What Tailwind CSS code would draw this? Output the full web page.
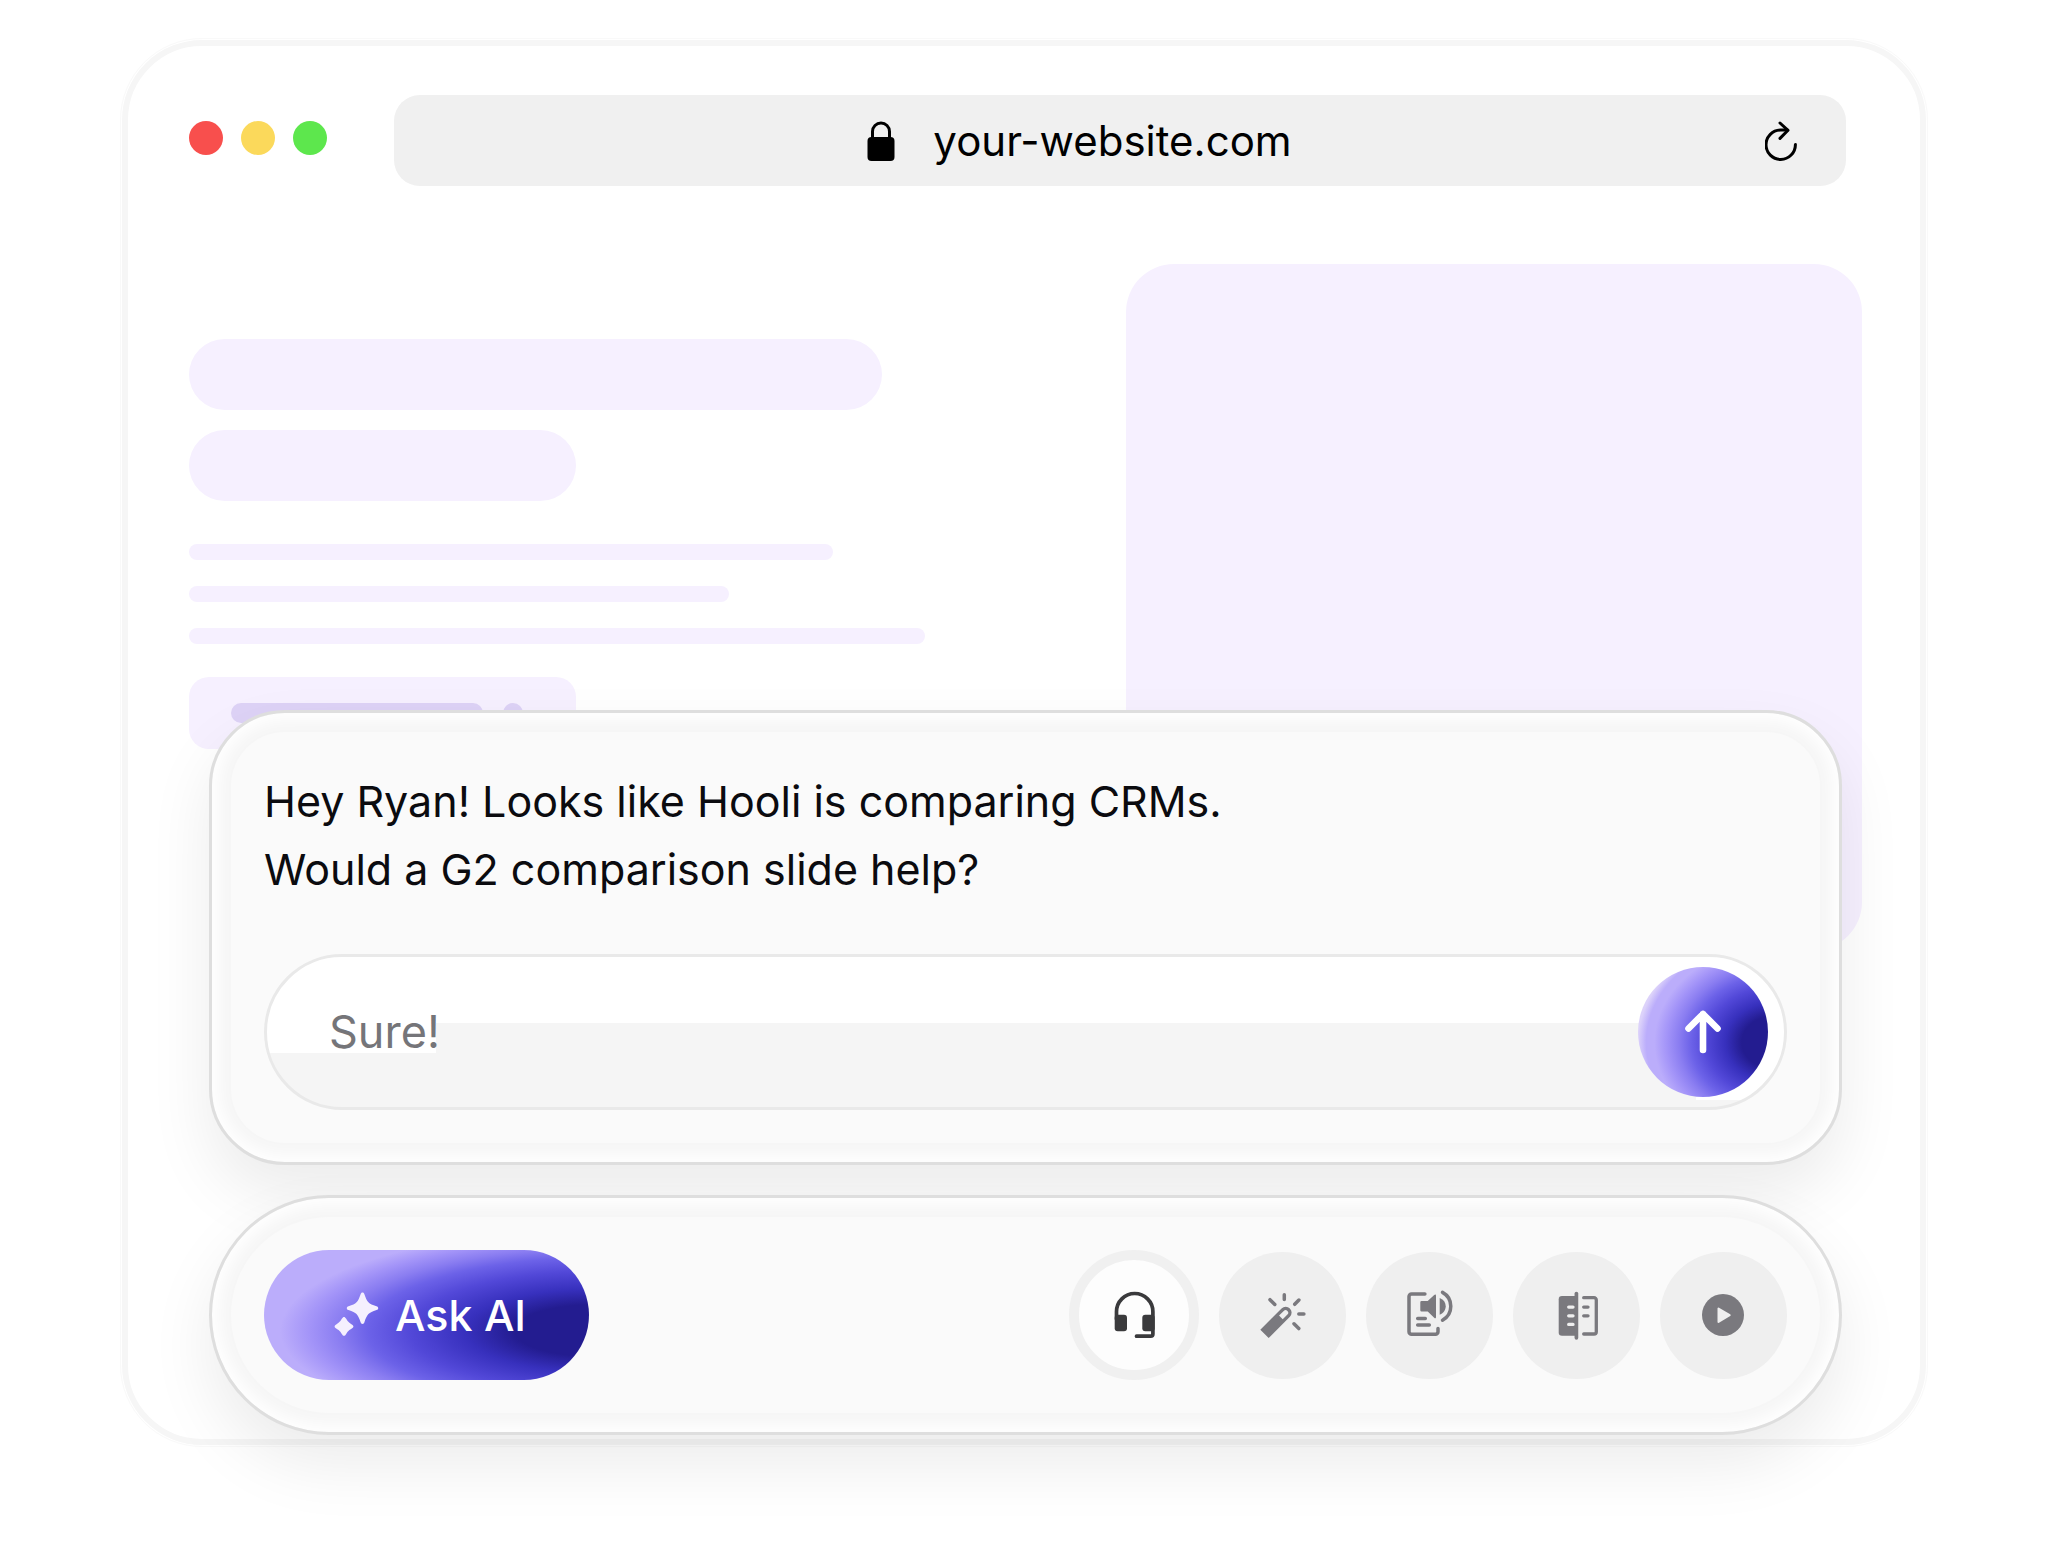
<!DOCTYPE html>
<html lang="en">
<head>
    <meta charset="UTF-8">
    <meta name="viewport" content="width=device-width, initial-scale=1.0">
    <title>Ask AI</title>
    <script src="https://cdn.jsdelivr.net/npm/@tailwindcss/browser@4"></script>
</head>
<body class="bg-white min-h-screen px-[122px] pt-10 pb-[101px] font-[Inter,sans-serif] text-[#0b0b0f]">
    <div class="border-6 border-[#f6f6f6] rounded-[80px] outline-1 outline-offset-1 outline-[#f9f9f9]">
        <!-- Browser bar -->
        <header class="flex items-center pt-[49px] pl-[61px] pr-[74px]">
            <div class="flex gap-[18px] -mt-1.5">
                <span class="size-[34px] rounded-full bg-[#f84f4d]"></span>
                <span class="size-[34px] rounded-full bg-[#fbd95b]"></span>
                <span class="size-[34px] rounded-full bg-[#5de74d]"></span>
            </div>
            <div class="flex-1 flex items-center ml-[67px] h-[91px] pr-[49px] rounded-[26px] bg-[#f0f0f0] text-black">
                <div class="flex-1 flex items-center justify-center gap-[38px]">
                    <svg class="w-7 h-10" viewBox="0 0 28 40" fill="none">
                        <path d="M5.5 18V10.5a8.5 8.5 0 0 1 17 0V18" stroke="currentColor" stroke-width="3"/>
                        <rect x="0.5" y="16" width="27" height="24" rx="4" fill="currentColor"/>
                    </svg>
                    <span class="text-[42px] leading-[52px]">your-website.com</span>
                </div>
                <button type="button" aria-label="Reload">
                    <svg class="w-8 h-10" viewBox="0 0 32 40" fill="none" stroke="currentColor" stroke-width="3" stroke-linecap="round" stroke-linejoin="round">
                        <path d="M30.4 23.6A14.7 14.7 0 1 1 15.7 9H22.5"/>
                        <path d="M15 2 23 9.3 15 17.4"/>
                    </svg>
                </button>
            </div>
        </header>

        <!-- Page skeleton -->
        <div class="flex justify-between pt-[78px] pl-[61px] pr-[58px]">
            <div class="flex-1 pt-[75px]">
                <div class="w-[693px] h-[71px] rounded-full bg-[#f6f0ff]"></div>
                <div class="w-[387px] h-[71px] mt-5 rounded-full bg-[#f6f0ff]"></div>
                <div class="w-[644px] h-4 mt-[43px] rounded-full bg-[#f6f0ff]"></div>
                <div class="w-[540px] h-4 mt-[26px] rounded-full bg-[#f6f0ff]"></div>
                <div class="w-[736px] h-4 mt-[26px] rounded-full bg-[#f6f0ff]"></div>
                <div class="flex items-center gap-5 w-[387px] h-[72px] mt-[33px] pl-[42px] rounded-[20px] bg-[#f6f0ff]">
                    <div class="w-[252px] h-5 rounded-full bg-[#ddd2f6]"></div>
                    <div class="size-5 rounded-full bg-[#ddd2f6]"></div>
                </div>
            </div>
            <div class="w-[44%] h-[686px] rounded-[48px] bg-[#f6f0ff]"></div>
        </div>

        <!-- Assistant -->
        <div class="relative flex flex-col gap-[30px] -mt-60 mb-1 ml-[81px] mr-[78px]">
            <section class="p-[19px] border-3 border-[#dedede] rounded-[76px] bg-[#f6f6f6] shadow-[inset_0_0_16px_7px_#fff,0_30px_64px_rgba(0,0,0,0.08)]">
                <div class="px-[33px] pt-[35px] pb-[33px] rounded-[54px] bg-[#fafafa]">
                    <p class="text-[43px] leading-[68px]">Hey Ryan! Looks like Hooli is comparing CRMs.<br>Would a G2 comparison slide help?</p>
                    <form class="flex items-center mt-[51px] h-[156px] pl-[62px] pr-4 border-3 border-[#e9e9e9] rounded-full bg-[linear-gradient(#fff,#fff),linear-gradient(#fff,#fff),linear-gradient(#fff,#fff),linear-gradient(#f5f5f5,#f5f5f5)] bg-[position:right_top,left_top,left_top,left_top] bg-[size:88px_143px,169px_96px,100%_66px,100%_100%] bg-no-repeat">
                        <input type="text" value="Sure!" aria-label="Your reply" class="flex-1 min-w-0 text-[45px] leading-[60px] text-[#757579] outline-none">
                        <button type="submit" aria-label="Send" class="flex items-center justify-center size-[130px] rounded-full text-white bg-[radial-gradient(105%_85%_at_105%_58%,#231c90_24%,#3730bd_36%,#5248d8_50%,#6c62e8_61%,#8a7df1_70%,#a394f8_79%,#bbadfb_88%,#bbadfb_94%,#dcd2fa_100%)]">
                            <svg class="w-9 h-11" viewBox="0 0 36 44" fill="none" stroke="currentColor" stroke-width="6.6" stroke-linecap="round" stroke-linejoin="round">
                                <path d="M18 40V4M3.5 18.5 18 4l14.5 14.5"/>
                            </svg>
                        </button>
                    </form>
                </div>
            </section>

            <section class="p-[19px] border-3 border-[#dedede] rounded-full bg-[#f6f6f6] shadow-[inset_0_0_16px_7px_#fff,0_30px_64px_rgba(0,0,0,0.08)]">
                <div class="flex items-center justify-between p-[33px] rounded-full bg-[#fafafa]">
                    <button type="button" class="flex items-center justify-center gap-4 w-[325px] h-[130px] pl-1.5 rounded-full text-white text-[43px] leading-[60px] font-medium bg-[radial-gradient(100%_80%_at_102%_62%,#231c90_25%,#3730bd_40%,#5248d8_57%,#6c62e8_70%,#8a7df1_79%,#a394f8_88%,#bbadfb_97%)]">
                        <svg class="size-[46px]" viewBox="0 0 46 46" fill="#f5f0fe">
                            <path d="M29.5 .5c1 0 1.5.6 1.9 1.7 2.9 8.2 3.9 9.2 12.1 12.1 1.1.4 1.7.9 1.7 1.9s-.6 1.5-1.7 1.9c-8.2 2.9-9.2 3.9-12.1 12.1-.4 1.1-.9 1.7-1.9 1.7s-1.5-.6-1.9-1.7c-2.9-8.2-3.9-9.2-12.1-12.1-1.1-.4-1.7-.9-1.7-1.9s.6-1.5 1.7-1.9c8.2-2.9 9.2-3.9 12.1-12.1.4-1.1.9-1.7 1.9-1.7z"/>
                            <path d="M11 25c.8 0 1.3.5 2 1.6 1.9 3.1 2.7 3.9 5.8 5.8 1.1.7 1.6 1.2 1.6 2s-.5 1.3-1.6 2c-3.1 1.9-3.9 2.7-5.8 5.8-.7 1.1-1.2 1.6-2 1.6s-1.3-.5-2-1.6c-1.9-3.1-2.7-3.9-5.8-5.8-1.1-.7-1.6-1.2-1.6-2s.5-1.3 1.6-2c3.1-1.9 3.9-2.7 5.8-5.8.7-1.1 1.2-1.6 2-1.6z"/>
                        </svg>
                        Ask AI
                    </button>
                    <div class="flex items-center gap-5 text-[#7a797e]">
                        <button type="button" aria-label="Support" class="flex items-center justify-center size-[130px] rounded-full border-10 border-[#f0f0f0] bg-[#fdfdfd] text-[#3a3a3c]">
                            <svg class="size-12" viewBox="0 0 48 48" fill="none">
                                <path d="M6.5 28V20.7a18.2 18.2 0 0 1 36.4 0V43a2.2 2.2 0 0 1-2.2 2.2H26.5" stroke="currentColor" stroke-width="3.7" stroke-linecap="round"/>
                                <rect x="4.7" y="23.7" width="12.3" height="16.6" rx="3" fill="currentColor"/>
                                <rect x="32.3" y="23.7" width="12.4" height="16.6" rx="3" fill="currentColor"/>
                            </svg>
                        </button>
                        <button type="button" aria-label="Magic" class="flex items-center justify-center size-[127px] rounded-full bg-[#efefef]">
                            <svg class="size-12" viewBox="0 0 48 48" fill="none">
                                <path transform="translate(5.5 42.8) rotate(45)" fill="currentColor" fill-rule="evenodd" d="M-5.9 0V-30a5.9 5.9 0 0 1 11.8 0V0zM-2.6-23.2H2.6V-29.8a2.6 2.6 0 0 0-5.2 0z"/>
                                <path d="M25.3 3.8V8.6M11 8.7l4.8 4.8M35.7 13.3l4.2-4.3M39.8 23H44.9M35 32.8l4.8 4.8" stroke="currentColor" stroke-width="3.5" stroke-linecap="round"/>
                            </svg>
                        </button>
                        <button type="button" aria-label="Read aloud" class="flex items-center justify-center size-[127px] rounded-full bg-[#efefef]">
                            <svg class="size-12 overflow-visible" viewBox="0 0 48 48" fill="none">
                                <path d="M18.9 3H5.5A2.5 2.5 0 0 0 3 5.5V40.8a2.5 2.5 0 0 0 2.5 2.5H29.5A2.5 2.5 0 0 0 32 40.8V37.5M11.7 27.4H19.3M11.7 34H23.3" stroke="currentColor" stroke-width="3.5" stroke-linecap="round"/>
                                <path d="M15.5 10H21.7L28.2 4C29.3 3 30 3.5 30 4.8V26c0 1.3-.7 1.8-1.8.8L21.7 20.4H15.5a1.2 1.2 0 0 1-1.2-1.2V11.2A1.2 1.2 0 0 1 15.5 10z" fill="currentColor"/>
                                <path d="M33.7 7c4 1.5 6 4.7 6 8.3s-2 6.9-6 8.4z" fill="currentColor"/>
                                <path d="M36.5 1.4a15.8 15.8 0 0 1 0 27.8" stroke="currentColor" stroke-width="3.5" stroke-linecap="round"/>
                            </svg>
                        </button>
                        <button type="button" aria-label="Compare" class="flex items-center justify-center size-[127px] rounded-full bg-[#efefef]">
                            <svg class="size-12 overflow-visible" viewBox="0 0 48 48" fill="none" stroke-width="3.3" stroke-linecap="round">
                                <path d="M9 5H23.5V44.7H9a3.3 3.3 0 0 1-3.3-3.3V8.3A3.3 3.3 0 0 1 9 5z" fill="currentColor"/>
                                <path d="M23.4 2.5V46.8" stroke="currentColor" stroke-width="3.7"/>
                                <path d="M15.7 16.1H20M15.7 24.8H20M15.7 33.4H20" stroke="#efefef"/>
                                <path d="M30.7 6.7H41A2.3 2.3 0 0 1 43.3 9V40.7A2.3 2.3 0 0 1 41 43H30.7M30.7 16.1H35M30.7 24.8H35" stroke="currentColor"/>
                            </svg>
                        </button>
                        <button type="button" aria-label="Play" class="flex items-center justify-center size-[127px] rounded-full bg-[#efefef]">
                            <svg class="size-12" viewBox="0 0 48 48">
                                <circle cx="23" cy="24" r="21" fill="currentColor"/>
                                <path d="M18.5 17.5V31L29.7 24.2z" fill="#efefef" stroke="#efefef" stroke-width="2" stroke-linejoin="round"/>
                            </svg>
                        </button>
                    </div>
                </div>
            </section>
        </div>
    </div>
</body>
</html>
